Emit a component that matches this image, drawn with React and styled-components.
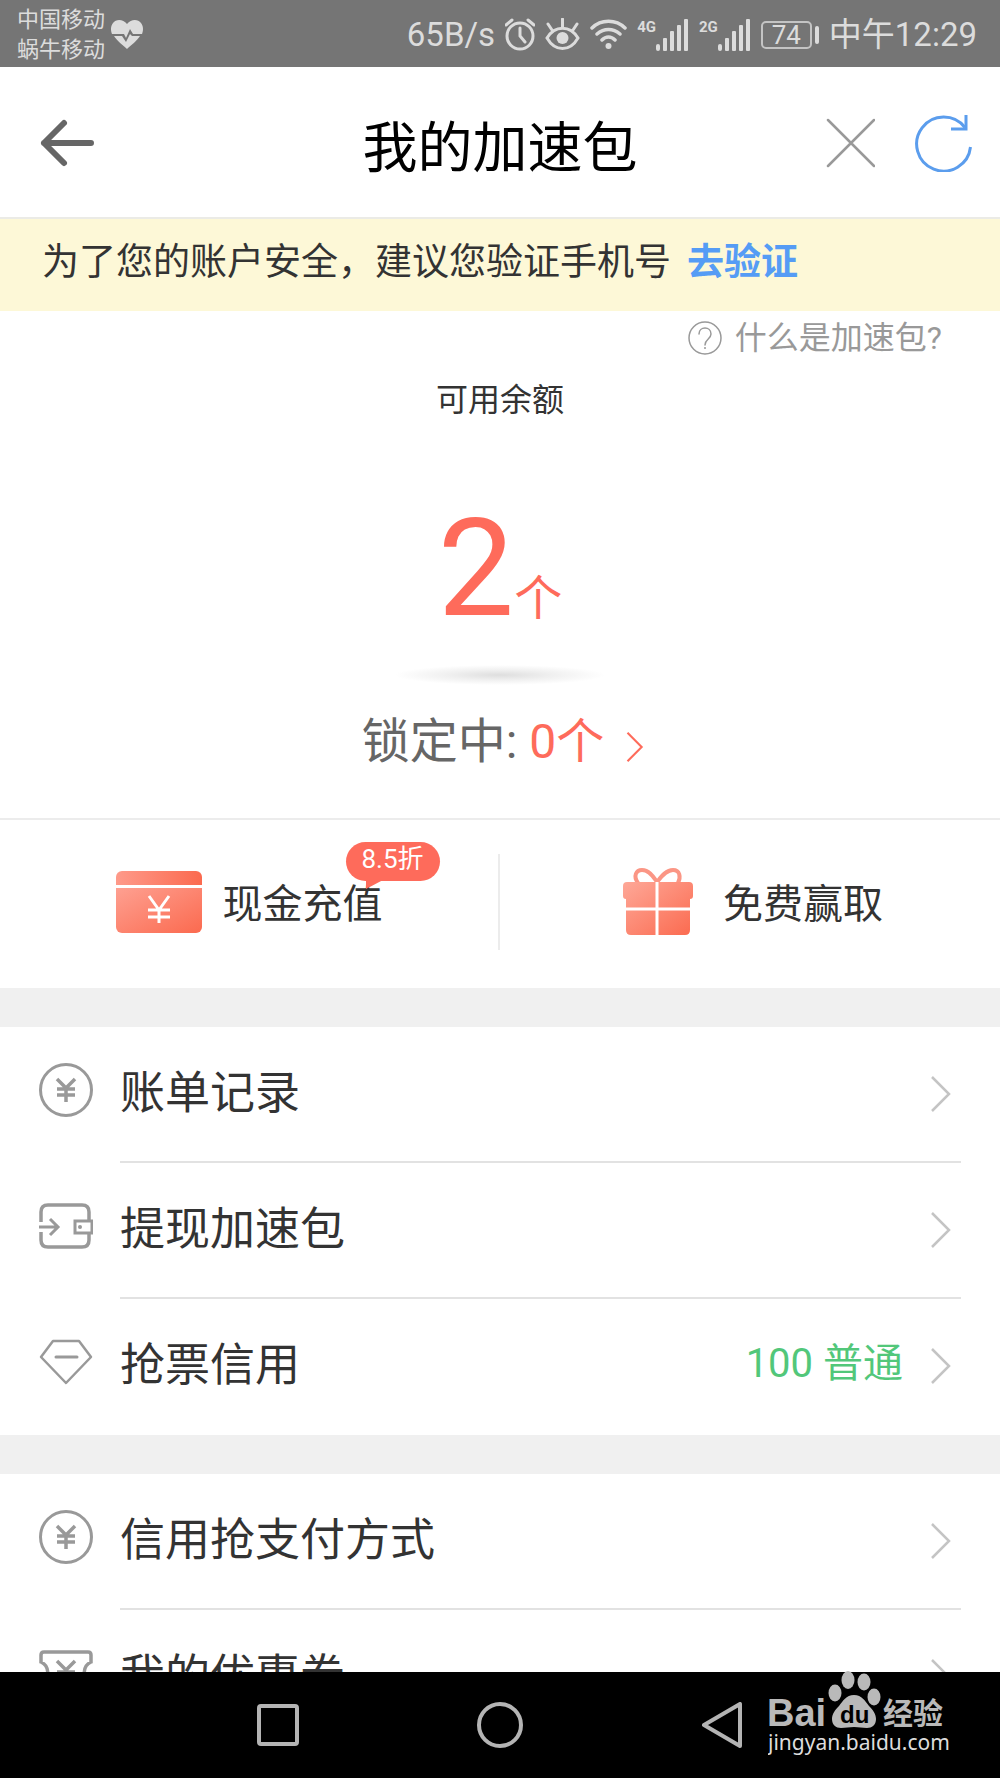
import React from 'react'
import styled, { createGlobalStyle } from 'styled-components'

const GlobalStyle = createGlobalStyle`
  * {
    box-sizing: border-box;
  }
  body {
    margin: 0;
    background: #fff;
    color: #333;
    font-family: Roboto, "Noto Sans CJK SC", sans-serif;
  }
  a {
    color: inherit;
    text-decoration: none;
  }
  button {
    padding: 0;
    border: none;
    background: none;
    color: inherit;
    font-family: inherit;
    cursor: pointer;
  }
  svg {
    display: block;
    flex: none;
  }
`

const Screen = styled.div`
  display: flex;
  flex-direction: column;
  height: 100vh;
  overflow: hidden;
`

/* status bar */
const StatusBar = styled.div`
  flex: none;
  display: flex;
  align-items: center;
  justify-content: space-between;
  height: 67px;
  padding: 2px 23px 0 17px;
  background: #757575;
  color: #dcdcdc;
`
const StatusGroup = styled.div`
  display: flex;
  align-items: center;
  gap: ${({ $gap }) => $gap}px;
`
const Carriers = styled.div`
  font-size: 22px;
  line-height: 30px;
`
const StatusText = styled.span`
  font-size: 33px;
  line-height: 40px;
  white-space: nowrap;
`
const Signal = styled.div`
  display: flex;
  align-items: flex-start;
`
const SignalType = styled.span`
  font-size: 15px;
  font-weight: 700;
  line-height: 16px;
`
const Battery = styled.div`
  display: flex;
  align-items: center;
  gap: 3px;
  &::after {
    content: '';
    width: 4px;
    height: 18px;
    border-radius: 2px;
    background: #dcdcdc;
  }
`
const BatteryLevel = styled.span`
  width: 51px;
  height: 28px;
  border: 2px solid #c4c4c4;
  border-radius: 5px;
  font-size: 26px;
  line-height: 25px;
  text-align: center;
`

/* title bar */
const Header = styled.header`
  flex: none;
  display: grid;
  grid-template-columns: 1fr auto 1fr;
  align-items: center;
  height: 152px;
  padding: 2px 27px 0;
  border-bottom: 2px solid #ebebe6;
`
const Title = styled.h1`
  margin: 0;
  padding-top: 10px;
  color: #000;
  font-size: 55px;
  font-weight: 400;
  line-height: 72px;
`
const HeaderTools = styled.div`
  display: flex;
  align-items: center;
  justify-content: ${({ $end }) => ($end ? 'flex-end' : 'flex-start')};
  gap: 40px;
  padding-left: 12px;
`

const Content = styled.main`
  flex: 1;
  min-height: 0;
  overflow: hidden;
`
const Notice = styled.p`
  margin: 0;
  height: 92px;
  padding: 18px 42px 0;
  background: #fdf8d7;
  font-size: 37px;
  line-height: 52px;
  white-space: nowrap;
`
const VerifyLink = styled.a`
  margin-left: 16px;
  color: #559cf5;
  font-weight: 700;
`

/* balance */
const Balance = styled.section`
  display: flex;
  flex-direction: column;
  align-items: center;
  border-bottom: 2px solid #ececec;
`
const HelpLink = styled.a`
  align-self: flex-end;
  display: flex;
  align-items: center;
  gap: 13px;
  margin-right: 58px;
  color: #999;
  font-size: 32px;
  line-height: 54px;
`
const BalanceLabel = styled.div`
  margin-top: 9px;
  font-size: 32px;
  line-height: 52px;
`
const Amount = styled.div`
  display: flex;
  align-items: baseline;
  margin-top: 63px;
  color: #fe6b5b;
  font-size: 136px;
  line-height: 160px;
`
const Unit = styled.span`
  font-size: 48px;
  line-height: 60px;
`
const Shadow = styled.div`
  width: 210px;
  height: 20px;
  margin: 16px 0 21px;
  background: radial-gradient(closest-side, #dedede, #f0f0f0 50%, #fff);
`
const Locked = styled.a`
  display: flex;
  align-items: center;
  margin: 0 0 40px 6px;
  color: #666;
  font-size: 48px;
  line-height: 72px;
  svg {
    margin: 10px 0 0 22px;
  }
`
const LockedCount = styled.span`
  margin-left: 12px;
  color: #fe6b5b;
`

/* two action buttons */
const Actions = styled.section`
  display: grid;
  grid-template-columns: 1fr 1fr;
  height: 168px;
  padding: 34px 0 38px;
`
const Action = styled.button`
  display: flex;
  align-items: center;
  justify-content: center;
  gap: ${({ $gap }) => $gap}px;
  font-size: 40px;
  line-height: 60px;
  &:first-child {
    border-right: 2px solid #ececec;
  }
  & + & {
    padding-left: 6px;
  }
`
const ActionLabel = styled.span`
  position: relative;
  padding-top: 6px;
`
const Badge = styled.span`
  position: absolute;
  left: 123px;
  bottom: 54px;
  width: 94px;
  height: 39px;
  border-radius: 20px;
  background: #fe6b5b;
  color: #fff;
  font-size: 26px;
  line-height: 34px;
  text-align: center;
  &::after {
    content: '';
    position: absolute;
    left: 20px;
    top: 38px;
    border-top: 9px solid #fe6b5b;
    border-right: 17px solid transparent;
  }
`

/* menu */
const Menu = styled.ul`
  margin: 0;
  padding: 0;
  border-top: 39px solid #f0f0f0;
  list-style: none;
`
const Row = styled.a`
  display: flex;
  height: 136px;
  padding: 0 39px;
  gap: 27px;
`
const RowIcon = styled.span`
  display: flex;
  align-items: center;
  padding-bottom: 10px;
`
const RowBody = styled.span`
  flex: 1;
  display: flex;
  align-items: center;
  padding-right: 10px;
  border-bottom: 2px solid #e2e2e2;
  font-size: 45px;
  line-height: 60px;
  li:last-child & {
    border-bottom-color: transparent;
  }
`
const RowLabel = styled.span`
  flex: 1;
`
const RowValue = styled.span`
  margin-right: 28px;
  padding-bottom: 4px;
  color: #52c77a;
  font-size: 40px;
`

/* system navigation */
const NavBar = styled.nav`
  flex: none;
  display: flex;
  align-items: center;
  justify-content: center;
  gap: 158px;
  height: 106px;
  background: #000;
`
const NavButton = styled.button`
  display: flex;
  align-items: center;
  justify-content: center;
  width: 64px;
  height: 64px;
`
const Watermark = styled.div`
  position: absolute;
  right: 50px;
  bottom: 18px;
`

const HeartIcon = () => (
  <svg width="32" height="29" viewBox="0 0 32 29">
    <path fill="#dcdcdc" d="M16 4C12-1 5-1 2 3-1 7 0 11 1 14h12l2 4 4-9 3 5h9c1-3 2-7-1-11-3-4-10-4-14 1z" />
    <path fill="#dcdcdc" d="M3 16h8l4 6 4-8 2 2h8c-3 5-9 9-13 13C12 25 6 21 3 16z" />
  </svg>
)

const AlarmIcon = () => (
  <svg width="30" height="33" viewBox="0 0 30 33" fill="none" stroke="#dcdcdc" strokeWidth="3">
    <circle cx="15" cy="18" r="13" />
    <path d="M15 10v8l5 6M1 7l6-5M29 7l-6-5" strokeLinecap="round" />
  </svg>
)

const EyeIcon = () => (
  <svg width="35" height="33" viewBox="0 0 35 33" fill="none" stroke="#dcdcdc" strokeWidth="3">
    <path d="M2 20c8-13 23-13 31 0-8 14-23 14-31 0z" />
    <path d="M17.500 9V1M7 12L3 6M28 12l4-6" strokeLinecap="round" />
    <circle cx="17.500" cy="20" r="6" fill="#dcdcdc" stroke="none" />
  </svg>
)

const WifiIcon = () => (
  <svg width="37" height="31" viewBox="0 0 37 31" fill="none" stroke="#dcdcdc" strokeWidth="3.500" strokeLinecap="round">
    <path d="M2 9C11 0 26 0 35 9M7 15c7-6 16-6 23 0M12 21c4-4 9-4 13 0" />
    <circle cx="18.500" cy="27" r="3" fill="#dcdcdc" stroke="none" />
  </svg>
)

const BarsIcon = () => (
  <svg width="33" height="32" viewBox="0 0 33 32" fill="#dcdcdc">
    <rect x="0" y="25" width="4" height="7" rx="2" />
    <rect x="7" y="19" width="4" height="13" rx="1" />
    <rect x="14" y="12" width="4" height="20" rx="1" />
    <rect x="21" y="6" width="4" height="26" rx="1" />
    <rect x="28" y="0" width="4" height="32" rx="1" />
  </svg>
)

const BackIcon = () => (
  <svg width="56" height="50" viewBox="0 0 56 50" fill="none" stroke="#666" strokeWidth="6" strokeLinecap="round" strokeLinejoin="round">
    <path d="M25 5L5 25l20 20M5 25h47" />
  </svg>
)

const CloseIcon = () => (
  <svg width="50" height="50" viewBox="0 0 50 50" stroke="#999" strokeWidth="2.500" strokeLinecap="round">
    <path d="M3 2l46 46M49 2L3 48" />
  </svg>
)

const RefreshIcon = () => (
  <svg width="58" height="58" viewBox="0 0 58 58" fill="none" stroke="#5b9ded" strokeWidth="3">
    <path d="M55.500 33A27 27 0 1 1 50 13.500" />
    <path d="M51 1v14H36" />
  </svg>
)

const HelpIcon = () => (
  <svg width="34" height="34" viewBox="0 0 34 34" fill="none" stroke="#999" strokeWidth="1.500">
    <circle cx="17" cy="17" r="16" />
    <path d="M11 13c0-8 12-8 12 0 0 5-6 5-6 11" strokeLinecap="round" />
    <circle cx="17" cy="27" r="1" fill="#999" stroke="none" />
  </svg>
)

const Chevron = ({ color = '#c4c4c4', width = 20, height = 36 }) => (
  <svg width={width} height={height} viewBox="0 0 20 36" fill="none" stroke={color} strokeWidth="2.500">
    <path d="M1 1l17 17L1 35" />
  </svg>
)

const CardIcon = () => (
  <svg width="86" height="62" viewBox="0 0 86 62">
    <defs>
      <linearGradient id="coral" x1="0" y1="0" x2="1" y2="1">
        <stop offset="0" stopColor="#fea091" />
        <stop offset="1" stopColor="#fb6a4f" />
      </linearGradient>
      <linearGradient id="coralTop" x1="0" y1="0" x2="1" y2="0">
        <stop offset="0" stopColor="#fe9a8a" />
        <stop offset="1" stopColor="#fb6a4f" />
      </linearGradient>
    </defs>
    <path fill="url(#coralTop)" d="M0 14V6a6 6 0 0 1 6-6h74a6 6 0 0 1 6 6v8z" />
    <path fill="url(#coral)" d="M0 17h86v39a6 6 0 0 1-6 6H6a6 6 0 0 1-6-6z" />
    <path d="M33 25l10 14 10-14M43 39v13M32 39h22M32 46h22" fill="none" stroke="#fff" strokeWidth="3" />
  </svg>
)

const GiftIcon = () => (
  <svg width="70" height="68" viewBox="0 0 70 68">
    <defs>
      <linearGradient id="gift" x1="0" y1="0" x2="1" y2="1">
        <stop offset="0" stopColor="#fea898" />
        <stop offset="1" stopColor="#fb6a4f" />
      </linearGradient>
    </defs>
    <path d="M15 15C10 8 13 2 19 2c8 0 12 8 15 12C38 9 43 2 50 2c7 0 8 7 5 13" fill="none" stroke="#fb9685" strokeWidth="4" />
    <path fill="url(#gift)" d="M4 14h62q4 0 4 4v10q0 3-3 3v31q0 5-5 5H8q-5 0-5-5V31q-3 0-3-3V18q0-4 4-4z" />
    <path d="M34 14v54M2 41h66" stroke="#fff" strokeWidth="3" />
  </svg>
)

const YenCircleIcon = () => (
  <svg width="54" height="54" viewBox="0 0 54 54" fill="none" stroke="#999" strokeWidth="3">
    <circle cx="27" cy="27" r="25.500" />
    <path d="M18 16l9 9 9-9M27 25v14M18 26h18M18 32h18" strokeWidth="3.500" />
  </svg>
)

const WalletIcon = () => (
  <svg width="54" height="46" viewBox="0 0 54 46" fill="none" stroke="#999" strokeWidth="3.500">
    <path d="M2 19V9q0-7 7-7h34q7 0 7 7v9M50 30v7q0 7-7 7H9q-7 0-7-7v-8" />
    <path d="M0 24h18M11 16l8 8-8 8" strokeWidth="3" />
    <path d="M53 18H36v12h17z" strokeWidth="3" />
    <circle cx="41" cy="24" r="2" fill="#999" stroke="none" />
  </svg>
)

const DiamondIcon = () => (
  <svg width="54" height="46" viewBox="0 0 54 46" fill="none" stroke="#999" strokeWidth="2.500" strokeLinejoin="round">
    <path d="M14 2h26l12 16-25 26L2 18z" />
    <path d="M17 18h21" strokeWidth="3" strokeLinecap="round" />
  </svg>
)

const CouponIcon = () => (
  <svg width="54" height="46" viewBox="0 0 54 46" fill="none" stroke="#999" strokeWidth="3.500">
    <path d="M5 2h44q3 0 3 3v7c-9 4-9 18 0 22v7q0 3-3 3H5q-3 0-3-3v-7c9-4 9-18 0-22V5q0-3 3-3z" />
    <path d="M18 11l9 9 9-9M27 20v15M18 22h18M18 28h18" />
  </svg>
)

const BaiduLogo = () => (
  <svg width="182" height="92" viewBox="0 0 182 92" fill="#b9b9b9">
    <text x="-1" y="58" fontFamily="Liberation Sans, sans-serif" fontSize="38" fontWeight="700">Bai</text>
    <ellipse cx="67" cy="25" rx="6.500" ry="8.500" />
    <ellipse cx="80" cy="12" rx="6.500" ry="9" />
    <ellipse cx="96" cy="14" rx="6.500" ry="8.500" />
    <ellipse cx="106" cy="29" rx="6.500" ry="8.500" />
    <path d="M86 27c8 0 11 6 15 11 4 4 7 8 7 13 0 6-4 9-9 9-5 0-8-1-13-1s-8 1-13 1c-5 0-9-3-9-9 0-5 3-9 7-13 4-5 7-11 15-11z" />
    <text x="72" y="55" fill="#000" fontFamily="Liberation Sans, sans-serif" fontSize="24" fontWeight="700">du</text>
    <text x="115" y="56" fontFamily="Noto Sans CJK SC, sans-serif" fontSize="30" fontWeight="700">经验</text>
    <text x="0" y="82" fill="#ddd" fontFamily="Noto Sans, sans-serif" fontSize="21">jingyan.baidu.com</text>
  </svg>
)

const menus = [
  [
    { label: '账单记录', Icon: YenCircleIcon },
    { label: '提现加速包', Icon: WalletIcon },
    { label: '抢票信用', Icon: DiamondIcon, value: '100 普通' },
  ],
  [
    { label: '信用抢支付方式', Icon: YenCircleIcon },
    { label: '我的优惠券', Icon: CouponIcon },
  ],
]

function MenuRow({ item }) {
  const { label, Icon, value } = item
  return (
    <li>
      <Row href="#">
        <RowIcon><Icon /></RowIcon>
        <RowBody>
          <RowLabel>{label}</RowLabel>
          {value && <RowValue>{value}</RowValue>}
          <Chevron />
        </RowBody>
      </Row>
    </li>
  )
}

function SignalMeter({ type }) {
  return (
    <Signal>
      <SignalType>{type}</SignalType>
      <BarsIcon />
    </Signal>
  )
}

function App() {
  return (
    <Screen lang="zh-CN">
      <GlobalStyle />
      <StatusBar>
        <StatusGroup $gap={6}>
          <Carriers>
            <div>中国移动</div>
            <div>蜗牛移动</div>
          </Carriers>
          <HeartIcon />
        </StatusGroup>
        <StatusGroup $gap={10}>
          <StatusText>65B/s</StatusText>
          <AlarmIcon />
          <EyeIcon />
          <WifiIcon />
          <SignalMeter type="4G" />
          <SignalMeter type="2G" />
          <Battery>
            <BatteryLevel>74</BatteryLevel>
          </Battery>
          <StatusText>中午12:29</StatusText>
        </StatusGroup>
      </StatusBar>

      <Header>
        <HeaderTools>
          <button aria-label="返回"><BackIcon /></button>
        </HeaderTools>
        <Title>我的加速包</Title>
        <HeaderTools $end>
          <button aria-label="关闭"><CloseIcon /></button>
          <button aria-label="刷新"><RefreshIcon /></button>
        </HeaderTools>
      </Header>

      <Content>
        <Notice>
          为了您的账户安全，建议您验证手机号
          <VerifyLink href="#">去验证</VerifyLink>
        </Notice>
        <Balance>
          <HelpLink href="#">
            <HelpIcon />
            什么是加速包?
          </HelpLink>
          <BalanceLabel>可用余额</BalanceLabel>
          <Amount>
            2<Unit>个</Unit>
          </Amount>
          <Shadow />
          <Locked href="#">
            锁定中:
            <LockedCount>0个</LockedCount>
            <Chevron color="#fe6b5b" width={18} height={30} />
          </Locked>
        </Balance>
        <Actions>
          <Action $gap={21}>
            <CardIcon />
            <ActionLabel>
              现金充值
              <Badge>8.5折</Badge>
            </ActionLabel>
          </Action>
          <Action $gap={30}>
            <GiftIcon />
            <ActionLabel>免费赢取</ActionLabel>
          </Action>
        </Actions>
        {menus.map((items, i) => (
          <Menu key={i}>
            {items.map((item) => (
              <MenuRow key={item.label} item={item} />
            ))}
          </Menu>
        ))}
      </Content>

      <NavBar>
        <NavButton aria-label="最近任务">
          <svg width="42" height="42" viewBox="0 0 42 42" fill="none" stroke="#b4b4b4" strokeWidth="4">
            <rect x="2" y="2" width="38" height="38" rx="2" />
          </svg>
        </NavButton>
        <NavButton aria-label="主屏幕">
          <svg width="46" height="46" viewBox="0 0 46 46" fill="none" stroke="#b4b4b4" strokeWidth="4">
            <circle cx="23" cy="23" r="21" />
          </svg>
        </NavButton>
        <NavButton aria-label="返回上一级">
          <svg width="40" height="46" viewBox="0 0 40 46" fill="none" stroke="#b4b4b4" strokeWidth="4" strokeLinejoin="round">
            <path d="M38 2v42L2 23z" />
          </svg>
        </NavButton>
      </NavBar>
      <Watermark>
        <BaiduLogo />
      </Watermark>
    </Screen>
  )
}

export default App
